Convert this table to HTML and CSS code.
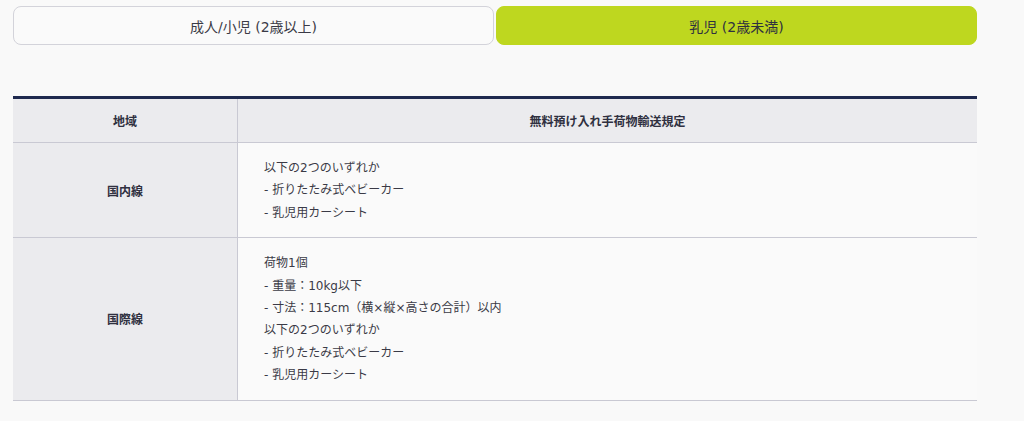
FILE: index.html
```html
<!DOCTYPE html>
<html lang="ja">
<head>
<meta charset="utf-8">
<link rel="stylesheet" href="styles.css">
</head>
<body>
<div class="page">
  <div class="tabs">
    <div class="tab">成人/小児 (2歳以上)</div>
    <div class="tab active">乳児 (2歳未満)</div>
  </div>
  <table class="rules">
    <thead>
      <tr><th class="c1">地域</th><th class="c2">無料預け入れ手荷物輸送規定</th></tr>
    </thead>
    <tbody>
      <tr>
        <th class="c1">国内線</th>
        <td class="c2">以下の2つのいずれか<br>- 折りたたみ式ベビーカー<br>- 乳児用カーシート</td>
      </tr>
      <tr>
        <th class="c1">国際線</th>
        <td class="c2">荷物1個<br>- 重量：10kg以下<br>- 寸法：115cm（横×縦×高さの合計）以内<br>以下の2つのいずれか<br>- 折りたたみ式ベビーカー<br>- 乳児用カーシート</td>
      </tr>
    </tbody>
  </table>
</div>
</body>
</html>
```
FILE: styles.css
```css
html, body {
  margin: 0;
  padding: 0;
  background: #f9f9f9;
  font-family: "DejaVu Sans", "Noto Sans CJK JP", sans-serif;
  color: #2f3040;
}
.page {
  width: 964px;
  padding: 6px 0 0 13px;
}
.tabs {
  display: flex;
  gap: 2px;
}
.tab {
  flex: 1;
  height: 39px;
  box-sizing: border-box;
  display: flex;
  align-items: center;
  justify-content: center;
  font-size: 14px;
  border: 1px solid #d3d3da;
  border-radius: 8px;
  background: #fafafa;
  color: #3a3a46;
}
.tab.active {
  background: #bed71f;
  border-color: #bed71f;
  color: #2e3040;
}
.rules {
  margin-top: 51px;
  width: 964px;
  border-collapse: collapse;
  border-top: 3px solid #1f2a4f;
  font-size: 12px;
}
.rules th, .rules td {
  border-bottom: 1px solid #c9c9d3;
  padding: 0;
}
.rules .c1 {
  width: 224px;
  border-right: 1px solid #c9c9d3;
  background: #ebebee;
  font-weight: bold;
  text-align: center;
}
.rules thead th {
  height: 45px;
  background: #ebebee;
  font-weight: bold;
  text-align: center;
  box-sizing: border-box;
}
.rules td.c2 {
  background: #fafafa;
  text-align: left;
  line-height: 22.4px;
  padding: 14px 26px 13px 26px;
  color: #3a3a46;
}
```
